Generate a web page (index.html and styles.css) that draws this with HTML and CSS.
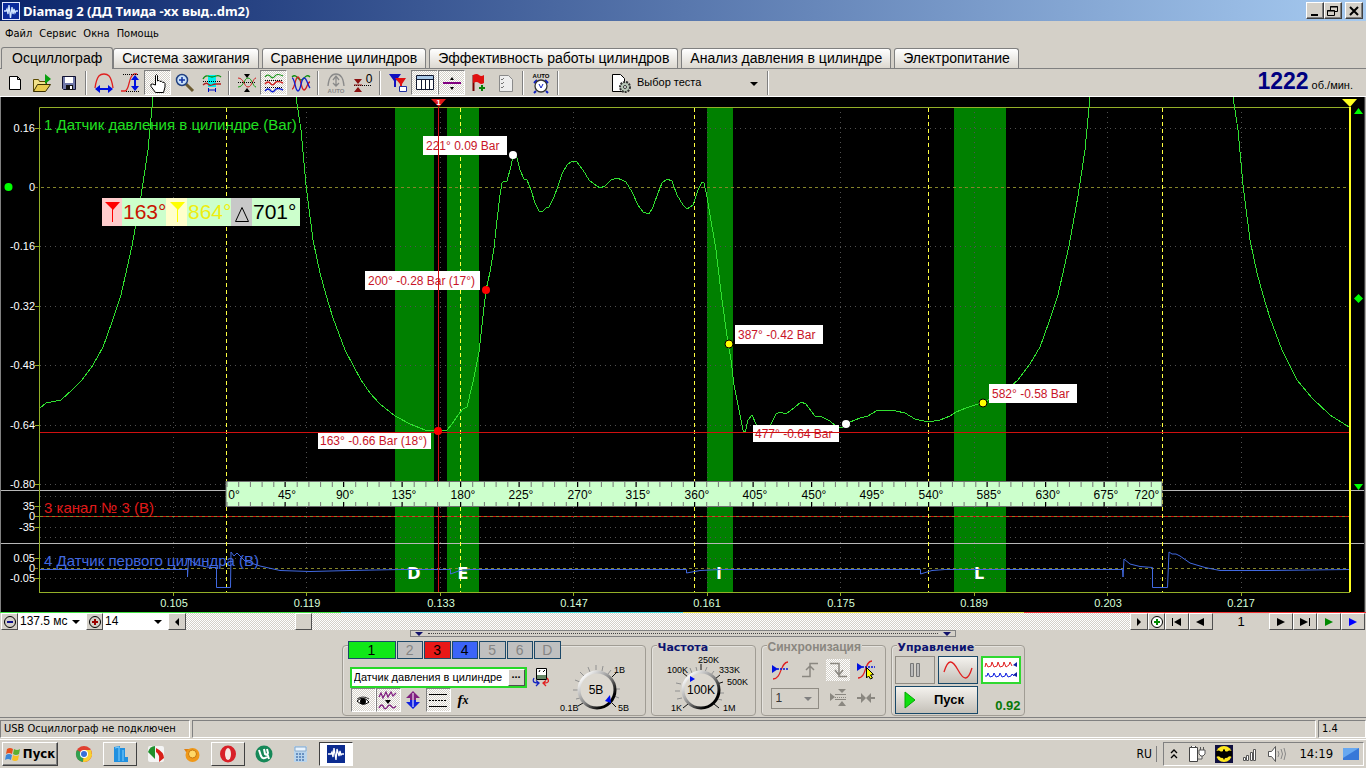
FILE: index.html
```html
<!DOCTYPE html>
<html lang="ru">
<head>
<meta charset="utf-8">
<title>Diamag 2</title>
<link rel="stylesheet" href="styles.css">
</head>
<body>
<header class="titlebar">
  <svg class="app-icon" width="18" height="18" viewBox="0 0 18 18"><rect width="18" height="18" fill="#dfe6ff"/><rect x="1" y="1" width="16" height="16" fill="#0a2a9c"/><path d="M2 9h2l1-2 1 5 1-9 1.500 13 1.500-11 1 7 1-5 1 4 1-2h2" fill="none" stroke="#cfe4ff" stroke-width="1.300"/></svg>
  <h1 class="title">Diamag 2 (ДД Тиида -хх выд..dm2)</h1>
  <div class="win-buttons">
    <button class="win" aria-label="Свернуть"><svg width="14" height="12" viewBox="0 0 14 12"><path d="M3 9h7v2H3z"/></svg></button>
    <button class="win" aria-label="Восстановить"><svg width="14" height="12" viewBox="0 0 14 12"><path d="M4.500 5V1.500h7v5H9M4 2h8M1.500 5.500h7v5h-7zM1 6h8" fill="none" stroke="#000"/></svg></button>
    <button class="win win-close" aria-label="Закрыть"><svg width="14" height="12" viewBox="0 0 14 12"><path d="M3 2l8 8M11 2l-8 8" stroke="#000" stroke-width="2"/></svg></button>
  </div>
</header>
<nav class="menu">
  <a href="#">Файл</a><a href="#">Сервис</a><a href="#">Окна</a><a href="#">Помощь</a>
</nav>
<div class="tabs" role="tablist">
  <button class="tab tab-active" role="tab" aria-selected="true">Осциллограф</button>
  <button class="tab" role="tab">Система зажигания</button>
  <button class="tab" role="tab">Сравнение цилиндров</button>
  <button class="tab" role="tab">Эффективность работы цилиндров</button>
  <button class="tab" role="tab">Анализ давления в цилиндре</button>
  <button class="tab" role="tab">Электропитание</button>
</div>
<div class="toolbar">
  <button class="tool" aria-label="Новый"><svg width="22" height="22" viewBox="0 0 22 22"><path d="M5.500 4.500h8l3 3v10h-11zM13.500 4.500v3h3" fill="#fff" stroke="#000"/></svg></button>
  <button class="tool" aria-label="Открыть"><svg width="22" height="22" viewBox="0 0 22 22"><path d="M2.500 19.500v-12h5l1 2h7v3" fill="#f2e28a" stroke="#5a4a00"/><path d="M2.500 19.500l4-7h13l-5 7z" fill="#e8cc50" stroke="#3a3000"/><path d="M14 2l6 5-6 5z" fill="#08a010"/></svg></button>
  <button class="tool" aria-label="Сохранить"><svg width="22" height="22" viewBox="0 0 22 22"><path d="M4.500 4.500h13v13h-12l-1-1z" fill="#7078a8" stroke="#101030"/><path d="M7 5h8v6H7z" fill="#fff"/><path d="M8 13h7v5H8z" fill="#111"/><path d="M12 14h2v3h-2z" fill="#fff"/></svg></button>
  <i class="sep"></i>
  <button class="tool" aria-label="Ширина"><svg width="22" height="22" viewBox="0 0 22 22"><path d="M2 16C4 2 8 2 11 2s7 0 9 14" fill="none" stroke="#e02020" stroke-width="1.300"/><path d="M6 17h10" stroke="#0010e0" stroke-width="2"/><path d="M2 17l5-4v8zM20 17l-5-4v8z" fill="#0010e0"/></svg></button>
  <button class="tool" aria-label="Высота"><svg width="22" height="22" viewBox="0 0 22 22"><path d="M1 19h4c5-1 3-15 9-17h3" fill="none" stroke="#e02020" stroke-width="1.300"/><path d="M3 2.500h16M6 19.500h13" stroke="#000" stroke-dasharray="1 1"/><path d="M15 7v8" stroke="#0010e0" stroke-width="2"/><path d="M15 3l4 5h-8zM15 19l4-5h-8z" fill="#0010e0"/></svg></button>
  <button class="tool pressed" aria-label="Рука"><svg width="22" height="22" viewBox="0 0 22 22"><path d="M8.500 13V3.500q1-2 2 0V9q1.500-1.500 2.500.5 1.500-1 2.500.8 2-.6 2.500 1.200V15l-1.500 5.500h-8L4 14.500q-1-3 1.500-2.500z" fill="#fff" stroke="#000"/></svg></button>
  <button class="tool" aria-label="Масштаб"><svg width="22" height="22" viewBox="0 0 22 22"><path d="M12 12l7 7" stroke="#6b5a30" stroke-width="3"/><circle cx="8" cy="8" r="5.500" fill="#c8e0f8" stroke="#204080" stroke-width="1.500"/><path d="M5 8h6M8 5v6" stroke="#1030a0" stroke-width="1.500"/></svg></button>
  <button class="tool" aria-label="Участок"><svg width="22" height="22" viewBox="0 0 22 22"><path d="M7 3h8v12H7z" fill="#00f0f0"/><path d="M2 7q2-4 5-3t4 1 4-1 5 1" fill="none" stroke="#109010" stroke-width="1.300"/><path d="M2 13q3-3 5-1t4 1 4-1 5 0" fill="none" stroke="#b02020" stroke-width="1.300"/><path d="M2 9.500h18" stroke="#000" stroke-dasharray="1 1"/><path d="M7.500 16v4M14.500 16v4M8 18h6" stroke="#0010c0"/></svg></button>
  <i class="sep"></i>
  <button class="tool" aria-label="Наложить"><svg width="22" height="22" viewBox="0 0 22 22"><path d="M2 15C8 15 8 6 12 6s5 9 8 9" fill="none" stroke="#10a010"/><path d="M2 6c6 0 6 9 10 9s5-9 8-9" fill="none" stroke="#d02020"/><path d="M2 10.500h18" stroke="#000" stroke-dasharray="1 1"/><path d="M8 2h6l-3 4zM8 20h6l-3-4z"/></svg></button>
  <button class="tool pressed" aria-label="Раздельно"><svg width="22" height="22" viewBox="0 0 22 22"><path d="M2 5q3-4 6 0 2 2 4-1t8 0" fill="none" stroke="#109010" stroke-width="1.200"/><path d="M2 12q3-4 6 0 2 2 4-1t8 0" fill="none" stroke="#d02020" stroke-width="1.400"/><path d="M2 19q3-4 6 0 2 2 4-1t8 0" fill="none" stroke="#1020d0" stroke-width="1.400"/><path d="M2 8.500h18M2 15.500h18" stroke="#000" stroke-dasharray="1 1"/></svg></button>
  <button class="tool" aria-label="Вместе"><svg width="22" height="22" viewBox="0 0 22 22"><path d="M2 5c4-4 6 3 9 3s5-7 9-3" fill="none" stroke="#109010" stroke-width="1.300"/><path d="M2 17C5 17 5 5 8 5s3 13 6 13 3-8 6-8" fill="none" stroke="#d02020" stroke-width="1.300"/><path d="M2 6c3 0 3 13 6 13s3-13 6-13 4 8 6 10" fill="none" stroke="#1020d0" stroke-width="1.300"/></svg></button>
  <i class="sep"></i>
  <button class="tool" aria-label="Авто"><svg width="22" height="22" viewBox="0 0 22 22"><path d="M3 14C4 2 9 2 11 2s7 0 8 12M11 5v8M8 8l3-4 3 4M8 11l3 3 3-3" fill="none" stroke="#8a8a8a" stroke-width="1.300"/><text x="11" y="21" class="icon-auto dim">AUTO</text></svg></button>
  <button class="tool" aria-label="Обнулить"><svg width="22" height="22" viewBox="0 0 22 22"><path d="M2 7h8l-4 5zM2 20h8l-4-5z" fill="#8b1010"/><path d="M2 13.500h18" stroke="#000" stroke-dasharray="1 1"/><path d="M2 13h8" stroke="#8b1010"/><text x="17" y="11" class="icon-zero">0</text></svg></button>
  <i class="sep"></i>
  <button class="tool" aria-label="Маркеры"><svg width="22" height="22" viewBox="0 0 22 22"><path d="M2 2h12L9 9v6H7V9z" fill="#1010c0"/><path d="M8 6h11l-4 6v4h-2v-4z" fill="#e01010"/><path d="M12.500 14.500h7v5h-7z" fill="#fff" stroke="#2030a0"/></svg></button>
  <button class="tool pressed" aria-label="Таблица"><svg width="22" height="22" viewBox="0 0 22 22"><path d="M2.500 3.500h17v14h-17z" fill="#fff" stroke="#101830"/><path d="M3 4h16v3H3z" fill="#a8c8e8"/><path d="M3 7.500h16M7.500 7v11M11.500 7v11M15.500 7v11" stroke="#101830"/></svg></button>
  <button class="tool pressed" aria-label="Разделить"><svg width="22" height="22" viewBox="0 0 22 22"><path d="M2 11h18" stroke="#800080" stroke-width="2"/><path d="M9 8l2-3 2 3zM9 15l2 3 2-3z"/></svg></button>
  <button class="tool" aria-label="Флаг"><svg width="22" height="22" viewBox="0 0 22 22"><path d="M5.500 3v16" stroke="#700" stroke-width="2"/><path d="M5 3q4-2 6 0t5 0v8q-3 2-5 0t-6 0z" fill="#e01010"/><path d="M14 13v6M11 16h6" stroke="#088008" stroke-width="2"/></svg></button>
  <button class="tool" aria-label="Список"><svg width="22" height="22" viewBox="0 0 22 22"><path d="M4.500 3.500h9l4 4v12h-13z" fill="#eee" stroke="#8a8a8a"/><path d="M6 7l1 1 2-2M6 11l1 1 2-2M6 15l1 1 2-2" fill="none" stroke="#777"/></svg></button>
  <i class="sep"></i>
  <button class="tool" aria-label="Автозапуск"><svg width="22" height="22" viewBox="0 0 22 22"><text x="11" y="6" class="icon-auto">AUTO</text><path d="M4 11l3-3M18 11l-3-3M6 19l-2 2M16 19l2 2" stroke="#1020c0" stroke-width="2"/><circle cx="11" cy="14" r="6" fill="#fff" stroke="#333" stroke-width="1.300"/><path d="M9 12l2 4 2-4" fill="none" stroke="#1020c0"/></svg></button>
  <i class="sep"></i>
  <label class="test-pick">
    <svg width="22" height="22" viewBox="0 0 22 22"><path d="M2.500 2.500h8l4 4v13h-12z" fill="#fff" stroke="#000"/><circle cx="15" cy="15" r="5" fill="#b8c8b8" stroke="#333" stroke-width="2" stroke-dasharray="2 1"/><circle cx="15" cy="15" r="1.500" fill="#fff" stroke="#333"/></svg>
    <span class="pick"><select class="pick-select" aria-label="Тест"><option>Выбор теста</option></select></span>
  </label>
  <i class="sep"></i>
  <output class="rpm"><b>1222</b> об./мин.</output>
</div>
<main class="scope">
<svg class="chart" viewBox="0 97 1366 515" role="img" aria-label="Осциллограмма">
  <rect y="97" width="1364" height="515" x="1"/>
  <path class="band" d="M395 108h39v484h-39zM447 108h32v484h-32zM707 108h26v484h-26zM954 108h52v484h-52z"/>
  <path class="grid" d="M40 128.500H1349M40 246.500H1349M40 306.500H1349M40 365.500H1349M40 425.500H1349M40 484.500H1349M40 496.500H1349M40 506.500H1349M40 527.500H1349M40 537.500H1349M40 558.500H1349M40 578.500H1349"/>
  <path class="grid" d="M173.500 112V592M306.500 112V592M440.500 112V592M573.500 112V592M707.500 112V592M840.500 112V592M974.500 112V592M1107.500 112V592M1241.500 112V592"/>
  <path class="zero" d="M35 187.500H1349M35 568.500H1349"/>
  <path class="split" d="M1 490.500H1364M1 543.500H1364"/>
  <path class="frame" d="M39.500 592.500V107.500H1350M39 592.500H1350M35 128.500h4M35 246.500h4M35 306.500h4M35 365.500h4M35 425.500h4M35 484.500h4M35 506.500h4M35 516.500h4M35 527.500h4M35 558.500h4M35 578.500h4M173.500 592v4M306.500 592v4M440.500 592v4M573.500 592v4M707.500 592v4M840.500 592v4M974.500 592v4M1107.500 592v4M1241.500 592v4"/>
  <path class="red-line" d="M40 516.500H1350"/><path class="zero" d="M40 516.500H1350"/>
  <g class="ch-name"><text x="44" y="130" class="c-green">1 Датчик давления в цилиндре (Bar)</text><text x="44" y="513" class="c-red">3 канал № 3 (В)</text><text x="44" y="566" class="c-blue">4 Датчик первого цилиндра (В)</text></g>
  <path class="phase" d="M226.500 108V592M460.500 108V592M694.500 108V592M928.500 108V592M1162.500 108V592"/>
  <g class="letters"><text x="414" y="579">D</text><text x="463" y="579">E</text><text x="719" y="579">i</text><text x="979" y="579">L</text></g>
  <path class="wave blue" d="M40 569.500H187.500V577L188.500 559L190 560L197 565L210 567.500H216.500V587.500H230.500L231 552L234 556L237 553L245 561L260 566L280 570.500L310 571.500L350 570.500L400 569.500H450.500V574L460 570.500L470 569.500H686.500V573L700 570.500L720 569.500H920.500V574L932 570.500L945 569.500H1122.500L1123 577L1124 559L1130 564L1140 566.500L1152.500 567.500V587.500H1167.500L1169 552L1172 554L1176 554L1180 556L1190 563L1205 567.500L1220 570.500H1270L1349 569.500"/>
  <path class="wave green" d="M40 408L46 403L61 400L72 390L82 380L93 365L103 347L112 322L121 295L132 246L141 196L148 150L153 97M296 97L301 130L306 185L313 240L320 273L326 295L333 318L345 350L361 380L370 393L380 404L395 416L410 424L425 430L440 431L447 430L452 424L458 415L463 409L467 407L473 382L479 352L482 325L486 290L490 272L494 248L497 220L500 195L502 183L504 181L507 181L511 166L513 156L517 158L520 170L524 179L527 180L531 190L535 203L539 211L542 212L546 208L549 207L554 197L558 186L562 174L567 165L572 161L577 162L583 170L589 180L594 184L600 188L605 186L611 180L617 178L622 180L626 182L632 192L638 205L643 212L649 214L653 207L658 193L662 183L667 179L672 181L677 195L683 205L687 209L693 205L698 190L702 182L704 183L707 197L716 250L722 300L728 343L731 360L734 385L738 405L743 430L745 433L748 420L752 415L756 424L762 432L771 424L776 414L780 412L786 414L795 407L801 402L806 404L815 416L822 417L830 421L837 427L843 427L850 422L860 418L868 416L876 411L885 410L896 411L905 413L915 419L928 422L940 420L950 416L956 412L966 408L978 404L983 402L1000 395L1018 380L1030 364L1040 347L1049 322L1058 295L1069 246L1078 196L1085 150L1090 97M1233 97L1238 130L1243 185L1250 240L1257 273L1263 295L1270 318L1282 350L1297 380L1312 398L1330 415L1349 427"/>
  <g class="tags"><rect x="423" y="136" width="84" height="19"/><rect x="365" y="271" width="115" height="19"/><rect x="735" y="325" width="88" height="19"/><rect x="318" y="433" width="113" height="16"/><rect x="753" y="425" width="86" height="17"/><rect x="989" y="384" width="88" height="19"/>
  <text x="426" y="150">221° 0.09 Bar</text><text x="368" y="285">200° -0.28 Bar (17°)</text><text x="738" y="339">387° -0.42 Bar</text><text x="320" y="445">163° -0.66 Bar (18°)</text><text x="755" y="438">477° -0.64 Bar</text><text x="992" y="398">582° -0.58 Bar</text></g>
  <path class="red-line" d="M40 432.500H1350M438.500 107V592"/>
  <path d="M431 99h15l-7 8z" fill="#e01818"/><text x="438.500" y="105" class="mark-no">1</text>
  <circle cx="513" cy="155" r="4" fill="#fff"/><circle cx="846" cy="424" r="4" fill="#fff"/><circle cx="438" cy="431" r="4" fill="red"/><circle cx="486" cy="290" r="4" fill="red"/>
  <circle cx="729" cy="344" r="4" fill="#ff0" stroke="#000"/><circle cx="983" cy="403" r="4" fill="#ff0" stroke="#000"/>
  <path d="M1350 107V592" stroke="#ffff20" stroke-width="2"/><path d="M1342 99h15l-7 8z" fill="#ffff20"/>
  <path d="M1354 114l4.500-6 4.500 6zM1354 298.500l4.500-4.500 4.500 4.500-4.500 4.500zM1354 484l4.500 6 4.500-6z" fill="#0f0"/><circle cx="8.500" cy="187" r="4" fill="#0f0"/>
  <rect class="ruler" x="226" y="481.500" width="936" height="25"/>
  <path class="ticks" d="M226.500 484.500H1162M226.500 504.500H1162" stroke-dasharray="1 10.700"/>
  <path class="ticks major" d="M284.500 484.500H1162M284.500 504.500H1162" stroke-dasharray="1 57.500"/>
  <g class="deg"><text x="234" y="499">0°</text><text x="287" y="499">45°</text><text x="345" y="499">90°</text><text x="404" y="499">135°</text><text x="463" y="499">180°</text><text x="521" y="499">225°</text><text x="580" y="499">270°</text><text x="638" y="499">315°</text><text x="697" y="499">360°</text><text x="755" y="499">405°</text><text x="814" y="499">450°</text><text x="872" y="499">495°</text><text x="931" y="499">540°</text><text x="989" y="499">585°</text><text x="1048" y="499">630°</text><text x="1106" y="499">675°</text><text x="1147" y="499">720°</text></g>
  <g class="y-axis"><text x="35" y="132">0.16</text><text x="35" y="191">0</text><text x="35" y="250">-0.16</text><text x="35" y="310">-0.32</text><text x="35" y="369">-0.48</text><text x="35" y="429">-0.64</text><text x="35" y="488">-0.80</text><text x="35" y="510">35</text><text x="35" y="520">0</text><text x="35" y="531">-35</text><text x="35" y="562">0.05</text><text x="35" y="572">0</text><text x="35" y="582">-0.05</text></g>
  <g class="x-axis"><text x="174" y="607">0.105</text><text x="307" y="607">0.119</text><text x="441" y="607">0.133</text><text x="574" y="607">0.147</text><text x="707" y="607">0.161</text><text x="841" y="607">0.175</text><text x="974" y="607">0.189</text><text x="1108" y="607">0.203</text><text x="1241" y="607">0.217</text></g>
  <rect x="102" y="198" width="198" height="28" fill="#ccffcc"/><rect x="102" y="198" width="20" height="28" fill="#fcc"/><rect x="166" y="198" width="21" height="28" fill="#ffc"/><rect x="231" y="198" width="21" height="28" fill="#c8c8c8"/>
  <path d="M105 202h15l-7 8zM112 208h1v14h-1z" fill="red"/><path d="M170 202h15l-7 8zM177 208h1v14h-1z" fill="#ff0"/><path d="M235.500 221.500h13l-6.500-14z" fill="none" stroke="#000"/>
  <g class="cursor-val"><text x="123" y="219" fill="#c81400">163°</text><text x="188" y="219" fill="#eeee10">864°</text><text x="253" y="219">701°</text></g>
  <path d="M0.500 97V612M1365 97V612" stroke="#808080" stroke-width="1"/>
</svg>
<div class="time-row">
  <button class="mini" aria-label="Уменьшить"><svg width="16" height="16" viewBox="0 0 16 16"><circle cx="8" cy="8" r="5.500" fill="none" stroke="#000"/><path d="M5 8h6" stroke="#10108a" stroke-width="2"/></svg></button>
  <span class="pick pick-white span-pick"><select class="pick-select" aria-label="Длительность"><option>137.5 мс</option></select></span>
  <button class="mini" aria-label="Увеличить"><svg width="16" height="16" viewBox="0 0 16 16"><circle cx="8" cy="8" r="5.500" fill="none" stroke="#000"/><path d="M5 8h6M8 5v6" stroke="#900" stroke-width="2"/></svg></button>
  <span class="pick pick-white count-pick"><select class="pick-select" aria-label="Количество"><option>14</option></select></span>
  <button class="arrow" aria-label="Влево"><svg width="8" height="8" viewBox="0 0 8 8"><path d="M6 0v8L2 4z"/></svg></button>
  <input class="scroll" type="range" min="0" max="1000" value="118" aria-label="Прокрутка">
  <button class="arrow" aria-label="Вправо"><svg width="8" height="8" viewBox="0 0 8 8"><path d="M2 0v8l4-4z"/></svg></button>
  <button class="mini" aria-label="Добавить"><svg width="16" height="16" viewBox="0 0 16 16"><circle cx="8" cy="8" r="5.500" fill="#fff" stroke="#000"/><path d="M5 8h6M8 5v6" stroke="#080" stroke-width="2"/></svg></button>
  <button class="step" aria-label="В начало"><svg width="12" height="8" viewBox="0 0 12 8"><path d="M1 0h1v8H1zM10 0v8L3 4z"/></svg></button>
  <button class="step" aria-label="Назад"><svg width="12" height="8" viewBox="0 0 12 8"><path d="M9 0v8L1 4z"/></svg></button>
  <output class="frame-no">1</output>
  <button class="step" aria-label="Вперёд"><svg width="12" height="8" viewBox="0 0 12 8"><path d="M2 0v8l8-4z"/></svg></button>
  <button class="step" aria-label="В конец"><svg width="12" height="8" viewBox="0 0 12 8"><path d="M1 0v8l8-4zM10 0h1v8h-1z"/></svg></button>
  <button class="step" aria-label="Воспроизвести"><svg width="12" height="8" viewBox="0 0 12 8"><path d="M2 0v8l8-4z" fill="#080"/></svg></button>
  <button class="step" aria-label="Живой режим"><svg width="12" height="8" viewBox="0 0 12 8"><path d="M2 0v8l8-4z" fill="#00f"/></svg></button>
</div>
<div class="splitter"><span class="handle"><i class="tri"></i><i class="dots"></i><i class="tri"></i></span></div>
<div class="controls">
  <section class="group group-channel" aria-label="Каналы">
    <div class="channel-side">
    <div class="channels"><button class="ch ch-1">1</button><button class="ch">2</button><button class="ch ch-3">3</button><button class="ch ch-4">4</button><button class="ch">5</button><button class="ch">6</button><button class="ch">D</button></div>
    <div class="sensor-row"><span class="sensor"><input class="sensor-input" type="text" value="Датчик давления в цилиндре" aria-label="Датчик"><button class="dots-btn">...</button></span><button class="plain" aria-label="Калибровка"><svg width="20" height="20" viewBox="0 0 20 20"><path d="M5.500 1.500h10v11h-10z" fill="#fff" stroke="#000"/><path d="M6 8h9v4H6z" fill="#686"/><path d="M8 5l1-2M12 5l2-2" stroke="#000"/><path d="M3 11q-3 5 4 5M5 13.500l3 2.500-3 3" fill="none" stroke="#1020c0" stroke-width="1.300"/><path d="M16 11q4 5-3 5M15 13.500l-3 2.500 3 3" fill="none" stroke="#e02020" stroke-width="1.300"/></svg></button></div>
    <div class="mode-row">
      <button class="tool pressed" aria-label="Видимость"><svg width="22" height="22" viewBox="0 0 22 22"><path d="M5 12q6-6 12 1-6 5-12-1z" fill="#fff" stroke="#000"/><circle cx="11" cy="12.500" r="3" /><path d="M5 10q6-4 12 0" fill="none" stroke="#333"/></svg></button>
      <button class="tool pressed" aria-label="Фильтр"><svg width="22" height="22" viewBox="0 0 22 22"><path d="M2 8l2-4 2 5 3-6 2 5 3-5 2 4 3-3M2 19q3-6 5 0 2 2 4-2 2-2 4 1 2 2 4-1" fill="none" stroke="#802080" stroke-width="1.300"/><path d="M8 11h6l-3 4z"/></svg></button>
      <button class="tool" aria-label="Инверсия"><svg width="22" height="22" viewBox="0 0 22 22"><path d="M11 2l7 7h-4v2H8V9H4z" fill="#802080"/><path d="M11 20l7-7h-4v-2H8v2H4z" fill="#1020e0"/><path d="M11 4v14" stroke="#fff"/></svg></button>
      <button class="tool pressed" aria-label="Линии"><svg width="22" height="22" viewBox="0 0 22 22"><path d="M2 5.500h18M2 17.500h18" stroke="#000"/><path d="M2 11.500h18" stroke="#000" stroke-dasharray="2 1"/></svg></button>
      <button class="tool fx">f<small>x</small></button>
    </div>
    </div>
    <svg class="dial" width="88" height="66" viewBox="0 0 88 66"><defs><linearGradient id="rim" x2="1" y2="1"><stop offset="0.100" stop-color="#fff"/><stop offset="0.500" stop-color="#888"/><stop offset="0.800" stop-color="#000"/></linearGradient></defs><g class="marks"><path d="M24 48l-4 1M22 40h-5M24 32l-5-2M28 26l-4-4M34 22l-2-5M40 20V15M46 21l1-5M52 24l3-4M59 39h5M58 46l5 2"/></g><path class="marks strong" d="M56 27l4-4M56 53l4 4M27 53l-5 3"/><circle cx="41" cy="40" r="18" fill="#dcd8d0" stroke="url(#rim)" stroke-width="3"/><path d="M54 45l-5 6 6 2z" fill="#0010f0"/><text x="40" y="44" class="dial-val">5В</text><text x="4" y="61">0.1В</text><text x="58" y="23">1В</text><text x="62" y="61">5В</text></svg>
  </section>
  <section class="group group-rate">
    <h2 class="legend">Частота</h2>
    <svg class="dial" width="100" height="66" viewBox="0 0 100 66"><g class="marks"><path d="M30 48l-5 1M28 41h-5M29 34l-5-1M40 23l-2-5M45 21l-1-4M53 22l2-5M59 25l3-4M67 43h5M65 49l5 1"/></g><path class="marks strong" d="M36 27l-5-4M49 20V14M63 29l5-4M65 34l6-2M62 54l5 4M36 54l-5 4"/><circle cx="49" cy="40" r="18" fill="#dcd8d0" stroke="url(#rim)" stroke-width="3"/><path d="M38 26l5 3-5 3z" fill="#0010f0"/><text x="49" y="44" class="dial-val">100K</text><text x="46" y="13">250K</text><text x="15" y="23">100K</text><text x="67" y="23">333K</text><text x="75" y="35">500K</text><text x="19" y="61">1K</text><text x="71" y="61">1M</text></svg>
  </section>
  <section class="group group-sync">
    <h2 class="legend legend-off">Синхронизация</h2>
    <div class="sync-grid">
      <button class="plain" aria-label="Уровень"><svg width="22" height="22" viewBox="0 0 22 22"><path d="M3 20c9 0 7-17 15-17" fill="none" stroke="#e02020" stroke-width="1.300"/><path d="M2 6l6 4-6 4z" fill="#0010e0"/><path d="M7 10h12" stroke="#0010e0" stroke-width="1.500" stroke-dasharray="2 1"/></svg></button>
      <button class="plain" aria-label="Фронт"><svg width="22" height="22" viewBox="0 0 22 22"><path d="M3 17.500h8v-13h8M7 11l4-4 4 4" fill="none" stroke="#8a8780" stroke-width="1.500"/></svg></button>
      <button class="plain dither" aria-label="Спад"><svg width="22" height="22" viewBox="0 0 22 22"><path d="M3 4.500h9v13h8M8 11l4 5 4-5" fill="none" stroke="#8a8780" stroke-width="1.500"/></svg></button>
      <button class="plain" aria-label="Указать"><svg width="22" height="22" viewBox="0 0 22 22"><path d="M3 19c9 0 6-17 14-17" fill="none" stroke="#e02020" stroke-width="1.300"/><path d="M2 4l6 4-6 4z" fill="#0010e0"/><path d="M7 8h13" stroke="#0010e0" stroke-width="1.500" stroke-dasharray="2 1"/><path d="M11.500 8.500l7 7-3 .5 2 3-2 1-2-3-2 2z" fill="#ff0" stroke="#000"/></svg></button>
      <span class="pick pick-sync"><select class="pick-select" aria-label="Канал синхронизации"><option>1</option></select></span>
      <button class="plain" aria-label="Полоса"><svg width="22" height="22" viewBox="0 0 22 22"><path d="M3 6l5 4-5 4z" fill="#8a8780"/><path d="M8 7.500h11M8 12.500h11" stroke="#8a8780"/><path d="M8 10.500h11" stroke="#8a8780" stroke-dasharray="1 1"/><path d="M11 2h8l-4 4zM11 19h8l-4-5z" fill="#8a8780"/></svg></button>
      <button class="plain" aria-label="Сжать"><svg width="22" height="22" viewBox="0 0 22 22"><path d="M2 10h4V6l5 5-5 5v-4H2zM20 10h-4V6l-5 5 5 5v-4h4z" fill="#8a8780"/></svg></button>
    </div>
  </section>
  <section class="group group-run">
    <h2 class="legend">Управление</h2>
    <div class="run-grid">
      <button class="big" aria-label="Пауза"><svg width="32" height="22" viewBox="0 0 32 22"><path d="M11.500 4.500h3v13h-3zM17.500 4.500h3v13h-3z" fill="#bbb" stroke="#777"/></svg></button>
      <button class="big big-blue" aria-label="Сигнал"><svg width="32" height="22" viewBox="0 0 32 22"><path d="M2 13C6 0 10 0 16 11s10 11 14-2" fill="none" stroke="#e02020" stroke-width="1.300"/></svg></button>
      <button class="big big-green" aria-label="Самописец"><svg width="34" height="22" viewBox="0 0 34 22"><path d="M1 8l1-4 2 4 3-1 1-4 2 5 3-1 1-4 2 5 3-1 1-4 2 5 3-2 1-3 2 4" fill="none" stroke="#e02020"/><path d="M1 17h2l1-3 2 4 3-1 1-3 2 4 3-1 1-3 2 4 3-1 1-3 2 4 3-1 1-2 2 2" fill="none" stroke="#1020e0"/><path d="M29 6l4-3v5zM29 16l4-3v5z" fill="#1020a0"/></svg></button>
      <button class="big big-blue start"><svg width="12" height="18" viewBox="0 0 12 18"><path d="M1 1v16l10-8z" fill="#10e010" stroke="#0a0"/></svg><span>Пуск</span></button>
      <output class="version">0.92</output>
    </div>
  </section>
</div>
</main>
<footer class="status"><span class="cell cell-a">USB Осциллограф не подключен</span><span class="cell cell-b"></span><span class="cell cell-c">1.4</span></footer>
<div class="taskbar">
  <button class="start-btn"><svg width="16" height="16" viewBox="0 0 16 16"><path d="M2 3q3-2 6 0L7 8Q4 6 1 8z" fill="#e8501c"/><path d="M9 3q3 2 6 0l-1 5q-3 2-6 0z" fill="#5cb030"/><path d="M1 9q3-2 6 0l-1 5q-3-2-6 0z" fill="#3c88d8"/><path d="M8 9q3 2 6 0l-1 5q-3 2-6 0z" fill="#f8c020"/></svg>Пуск</button>
  <div class="apps">
    <button class="app" aria-label="Chrome"><svg width="18" height="18" viewBox="0 0 18 18"><circle cx="9" cy="9" r="8" fill="#e04030"/><path d="M9 9L2 5a8 8 0 0 0 6 12z" fill="#30a050"/><path d="M9 9h8a8 8 0 0 1-9 8z" fill="#f8d030"/><path d="M9 5h7q2 5-1 8L9 9z" fill="#f8d030"/><circle cx="9" cy="9" r="4" fill="#fff"/><circle cx="9" cy="9" r="3" fill="#3870d8"/></svg></button>
    <button class="app raised" aria-label="Папка"><svg width="18" height="18" viewBox="0 0 18 18"><path d="M3 2l6-1v16H3zM9 3h5v14H9zM14 12h3v5h-3z" fill="#2090e0"/><path d="M4 3l4-1v14M12 5v11" stroke="#80d0ff" fill="none"/></svg></button>
    <button class="app" aria-label="Просмотр"><svg width="18" height="18" viewBox="0 0 18 18"><rect x="1" y="1" width="16" height="16" rx="2" fill="#f4f4f4"/><path d="M8 1v13L1 7q2-6 7-6z" fill="#20902c"/><path d="M9 3q8 4 8 10l-5 4q1-8-3-10z" fill="#d82018"/></svg></button>
    <button class="app" aria-label="Плеер"><svg width="18" height="18" viewBox="0 0 18 18"><path d="M1 4h8v3H3z" fill="#e08010"/><circle cx="9.500" cy="10" r="7" fill="#f09818"/><circle cx="9.500" cy="9" r="4" fill="#ffd868" stroke="#c87810"/></svg></button>
    <button class="app raised" aria-label="Opera"><svg width="18" height="18" viewBox="0 0 18 18"><ellipse cx="9" cy="9" rx="8" ry="8.500" fill="#d82028"/><ellipse cx="9" cy="9" rx="3" ry="6" fill="#f4e8e4"/></svg></button>
    <button class="app" aria-label="Торрент"><svg width="18" height="18" viewBox="0 0 18 18"><circle cx="9" cy="9" r="8.500" fill="#168858"/><path d="M4 5l2 6q2 4 6 1M9 4l1 5q2 2 3-1l-1-4M12 8l2 6" fill="none" stroke="#fff" stroke-width="2"/></svg></button>
    <button class="app" aria-label="Калькулятор"><svg width="18" height="18" viewBox="0 0 18 18"><path d="M3 1h13v16H3z" fill="#b8d4ec"/><path d="M4 2h11v4H4z" fill="#e8f4ff" stroke="#88a8c8"/><path d="M5 9h9M5 12h9M5 15h9" stroke="#6890c0" stroke-width="2" stroke-dasharray="2 1"/></svg></button>
    <button class="app active" aria-label="Diamag"><svg width="18" height="18" viewBox="0 0 18 18"><rect width="18" height="18" fill="#0c2c90"/><path d="M1 9h3l1-2 1 5 1-9 2 12 1-11 2 7 1-5 1 4 1-1h2" fill="none" stroke="#fff" stroke-width="1.300"/></svg></button>
  </div>
  <span class="lang">RU</span>
  <div class="tray">
    <svg width="10" height="12" viewBox="0 0 10 12"><path d="M2 5l3-3 3 3M2 10l3-3 3 3" fill="none" stroke="#000" stroke-width="1.300"/></svg>
    <svg width="18" height="18" viewBox="0 0 18 18"><path d="M1.500 2.500h8v14h-8zM3.500 1v1.500h4V1" fill="#fff" stroke="#444"/><path d="M11 5h6v4l-2 2h-2l-2-2zM12.500 2v3M15.500 2v3M14 11v3h-4" fill="#fff" stroke="#555"/></svg>
    <svg width="18" height="18" viewBox="0 0 18 18"><rect width="18" height="18" fill="#101040"/><circle cx="9" cy="9" r="8" fill="#ffe820"/><path d="M1 6q3-1 4 0 1 1 3 0V4l1 1 1-1v2q2 1 3 0 1-1 4 0v6q-3-2-5 1-2-1-3 2-1-3-3-2-2-3-5-1z"/></svg>
    <svg width="16" height="16" viewBox="0 0 16 16"><path d="M1.500 11.500h2v3h-2zM4.500 9.500h2v5h-2zM8.500 6.500h2v8h-2zM11.500 3.500h2v11h-2z" fill="#fff" stroke="#555"/></svg>
    <svg width="20" height="18" viewBox="0 0 20 18"><path d="M1.500 6.500h3l4-5v15l-4-5h-3z" fill="#fff" stroke="#555"/><path d="M11 6q2 3 0 6M14 4q3 5 0 10M17 3q3 6 0 12" fill="none" stroke="#888"/></svg>
    <time class="clock">14:19</time>
    <svg width="18" height="14" viewBox="0 0 18 14"><path d="M1 1h16v12H1z" fill="#3878d8"/><path d="M1 1h16L1 11z" fill="#68a8f0"/></svg>
  </div>
</div>
</body>
</html>
```
FILE: styles.css
```css
* { box-sizing: border-box; }
:root {
  --face: #d4d0c8;
  --shade: #808080;
  --dither: repeating-conic-gradient(#fff 0 25%, #d4d0c8 0 50%) 0 0 / 2px 2px;
  --tahoma: "DejaVu Sans Condensed", "DejaVu Sans", sans-serif;
}
body {
  margin: 0;
  min-height: 100vh;
  display: flex;
  flex-direction: column;
  background: var(--face);
  color: #000;
  font: 11px/13px "Liberation Sans", Arial, sans-serif;
}
button, select, input { font: inherit; color: inherit; border-radius: 0; }
button { display: flex; align-items: center; justify-content: center; padding: 0; background: var(--face); border: 0; }
svg { flex: none; display: block; }

.titlebar { display: flex; align-items: center; height: 21px; padding: 0 3px 0 2px; background: linear-gradient(90deg, #0a246a, #a6caf0); }
.title { flex: 1; margin: 0 0 0 3px; color: #fff; font: bold 13px/20px "Noto Sans", sans-serif; }
.win-buttons { display: flex; }
.win { width: 18px; height: 17px; border: 1px solid; border-color: #fff #404040 #404040 #fff; box-shadow: inset -1px -1px var(--shade); }
.win-close { margin-left: 3px; }

.menu { display: flex; gap: 7px; height: 26px; padding: 0 5px; align-items: center; font: 11px/14px var(--tahoma); }
.menu a { color: #000; text-decoration: none; }

.tabs { display: flex; align-items: flex-end; gap: 3px; padding-left: 1px; height: 22px; border-bottom: 1px solid var(--shade); font-size: 14px; }
.tab { height: 20px; padding: 0 8px; white-space: nowrap; background: linear-gradient(#fff, #dcd8d0); border: 1px solid var(--shade); border-bottom: 0; border-radius: 3px 3px 0 0; }
.tab-active { height: 22px; margin-bottom: -1px; margin-right: -3px; padding: 0 10px; background: var(--face); }

.toolbar { display: flex; align-items: center; height: 28px; padding-left: 1px; border-bottom: 1px solid #fff; }
.tool { width: 27px; height: 25px; }
.pressed { background: var(--dither); border: 1px solid; border-color: var(--shade) #fff #fff var(--shade); }
.dither { background: var(--dither); }
.sep { width: 8px; height: 24px; background: linear-gradient(90deg, transparent 3px, #808080 3px 4px, #fff 4px 5px, transparent 5px); }
.icon-auto { font: bold 6px "Liberation Sans", sans-serif; text-anchor: middle; }
.dim { fill: #8a8a8a; }
.icon-zero { font: 12px "Liberation Sans", sans-serif; text-anchor: middle; }
.test-pick { display: flex; align-items: center; gap: 3px; margin-left: 48px; width: 154px; }
.pick { position: relative; display: flex; flex: 1; height: 18px; }
.pick::after { content: ""; position: absolute; right: 6px; top: 8px; border: 4px solid transparent; border-top-color: #000; border-bottom: 0; pointer-events: none; }
.pick-select { width: 100%; padding: 0 2px; appearance: none; background: none; border: 0; outline: 0; }
.rpm { margin-left: auto; padding-right: 13px; font-size: 11px; line-height: 26px; }
.rpm b { color: #000080; font-size: 23px; }

.scope { display: flex; flex-direction: column; flex: 1; border-bottom: 1px solid var(--shade); }
.chart { width: 100%; height: auto; font: 11px "Liberation Sans", Arial, sans-serif; }
.chart .band { fill: #008000; }
.chart .grid { fill: none; stroke: #505050; stroke-dasharray: 1 4; }
.chart .zero { fill: none; stroke: #85852a; stroke-dasharray: 3 3; }
.chart .split { stroke: #b8b8b8; }
.chart .frame { fill: none; stroke: #94b028; }
.chart .red-line { fill: none; stroke: #d01010; }
.chart .phase { stroke: #ffff40; stroke-dasharray: 4 3; }
.chart .wave { fill: none; }
.chart .green { stroke: #30e030; shape-rendering: crispEdges; }
.chart .blue { stroke: #4169e1; }
.ch-name { font-size: 15px; }
.c-green { fill: #20e020; }
.c-red { fill: #e01818; }
.c-blue { fill: #4169e1; }
.letters { font: bold 16px "DejaVu Sans", sans-serif; fill: #fff; text-anchor: middle; }
.tags { font-size: 12px; fill: #c81428; }
.tags rect { fill: #fff; }
.mark-no { font-size: 8px; font-weight: bold; fill: #fff; text-anchor: middle; }
.ruler { fill: #ccffcc; stroke: #707070; }
.ticks { fill: none; stroke: #777; stroke-width: 5px; }
.major { stroke: #000; }
.deg { font-size: 12px; text-anchor: middle; }
.y-axis { fill: #fff; text-anchor: end; }
.x-axis { fill: #d8ffd8; text-anchor: middle; }
.cursor-val { font-size: 21px; }

.time-row { display: flex; height: 18px; padding: 1px 1px 0; background: linear-gradient(90deg, #40e040 25%, #40e0e0 25% 50%, #e8e040 50% 75%, #f03030 75%) 0 0 / 100% 1px no-repeat; }
.mini, .arrow, .step { height: 17px; border: 1px solid; border-color: #fff #505050 #505050 #fff; }
.mini { width: 17px; }
.arrow { width: 18px; }
.step { width: 24px; }
.time-row .pick { flex: none; height: 17px; }
.time-row .pick::after { top: 7px; }
.pick-white { background: #fff; font-size: 12px; }
.span-pick { width: 68px; }
.count-pick { width: 65px; }
.scroll { flex: 1; min-width: 0; height: 17px; margin: 0; appearance: none; background: var(--dither); }
.scroll::-webkit-slider-thumb { appearance: none; width: 17px; height: 17px; background: var(--face); border: 1px solid; border-color: #fff #505050 #505050 #fff; }
.frame-no { width: 56px; text-align: center; font-size: 13px; line-height: 17px; }

.splitter { display: flex; justify-content: center; height: 10px; }
.handle { display: flex; align-items: center; gap: 5px; width: 40%; height: 7px; padding: 0 4px; border: 1px solid var(--shade); }
.tri { border: 4px solid transparent; border-top-color: #10106a; border-bottom: 0; }
.dots { flex: 1; border-top: 1px dotted #404040; }

.controls { display: flex; justify-content: center; gap: 5px; flex: 1; padding: 5px 0 1px; }
.group { display: flex; flex-direction: column; height: 71px; border: 1px solid #a09c94; border-radius: 4px; box-shadow: inset 1px 1px #fff6; }
.legend { align-self: flex-start; margin: -5px 0 0 5px; padding: 0 1px; background: var(--face); color: #0c1470; font: bold 11px/13px "DejaVu Sans", sans-serif; }
.legend-off { color: #8a8780; font: bold 12px/13px "Liberation Sans", sans-serif; }
.group-channel { flex-direction: row; width: 304px; }
.group-rate { width: 105px; }
.group-sync { width: 125px; }
.group-run { width: 134px; }
.channel-side { width: 213px; margin: -5px 0 0 5px; }
.channels { display: flex; gap: 1px; height: 18px; background: var(--face); }
.ch { flex: 1; border: 1px solid #1c4868; background: #c0c0c0; color: #858585; font-size: 14px; }
.ch-1 { flex: none; width: 48px; background: #10e818; color: #000; }
.ch-3 { background: #e81818; color: #000; }
.ch-4 { background: #3c64f8; color: #000; }
.sensor-row { display: flex; align-items: center; gap: 2px; margin: 7px 0 0 2px; }
.sensor { display: flex; width: 177px; height: 21px; border: 2px solid #28d828; background: #fff; }
.sensor-input { flex: 1; min-width: 0; padding: 0 2px; border: 0; outline: 0; background: none; }
.dots-btn { width: 17px; padding-bottom: 6px; border: 1px solid; border-color: #fff #505050 #505050 #fff; font-weight: bold; }
.mode-row { display: flex; margin-left: 3px; }
.mode-row .tool { width: 25px; height: 24px; }
.fx { font: italic bold 15px/20px "Liberation Serif", serif; }
.fx small { font-size: 12px; }
.dial { font: 9px "Liberation Sans", Arial, sans-serif; }
.group-channel .dial { margin: 4px 0 0 -5px; }
.dial-val { font-size: 12px; text-anchor: middle; }
.marks { fill: none; stroke: #909090; }
.strong { stroke: #101010; }
.group-rate .dial { margin-top: -4px; }
.sync-grid { display: grid; grid-template-columns: 30px 28px 28px 28px; grid-template-rows: 28px 28px; place-items: center; padding: 2px 4px; }
.plain { width: 24px; height: 22px; }
.plain.dither { background: var(--dither); }
.pick-sync { grid-column: span 2; width: 48px; height: 21px; border: 1px solid #908c84; color: #333; font-size: 12px; }
.pick-sync .pick-select { padding: 0 4px; }
.pick-sync::after { border-top-color: var(--shade); }
.run-grid { display: grid; grid-template-columns: 40px 40px 40px; grid-template-rows: 28px 28px; gap: 2px 3px; padding: 2px 3px; }
.big { border: 1px solid #908c84; }
.big-blue { border-color: #184868; background: linear-gradient(#f4f2ee, #c4c0b8); }
.big-green { border: 2px solid #30d830; background: #fff; }
.start { grid-column: span 2; gap: 18px; padding-right: 4px; font: bold 13px/16px "Liberation Sans", sans-serif; }
.version { align-self: end; justify-self: end; color: #087808; font: bold 13px/16px "Liberation Sans", sans-serif; }

.status { display: flex; gap: 2px; height: 22px; padding-top: 2px; border-bottom: 1px solid #fff; font: 11px/16px var(--tahoma); }
.cell { height: 18px; padding: 0 3px; border: 1px solid; border-color: var(--shade) #fff #fff var(--shade); white-space: nowrap; }
.cell-a { width: 190px; }
.cell-b { flex: 1; }
.cell-c { width: 48px; }

.taskbar { display: flex; align-items: center; height: 28px; padding: 0 2px; font: 12px/16px var(--tahoma); }
.start-btn { gap: 2px; width: 56px; height: 24px; border: 1px solid; border-color: #fff #404040 #404040 #fff; box-shadow: inset -1px -1px var(--shade); font: bold 13px/16px var(--tahoma); }
.apps { display: flex; gap: 2px; margin-left: 9px; flex: 1; }
.app { width: 34px; height: 24px; }
.raised { border: 1px solid; border-color: #fff #404040 #404040 #fff; }
.active { background: #fff; border: 1px solid; border-color: #404040 #fff #fff #404040; }
.lang { padding: 0 4px; border-right: 1px solid var(--shade); }
.tray { display: flex; align-items: center; justify-content: space-between; width: 201px; height: 24px; margin-left: 6px; padding: 0 3px 0 5px; border: 1px solid; border-color: var(--shade) #fff #fff var(--shade); }
.clock { padding-left: 4px; font-size: 13px; }
```
